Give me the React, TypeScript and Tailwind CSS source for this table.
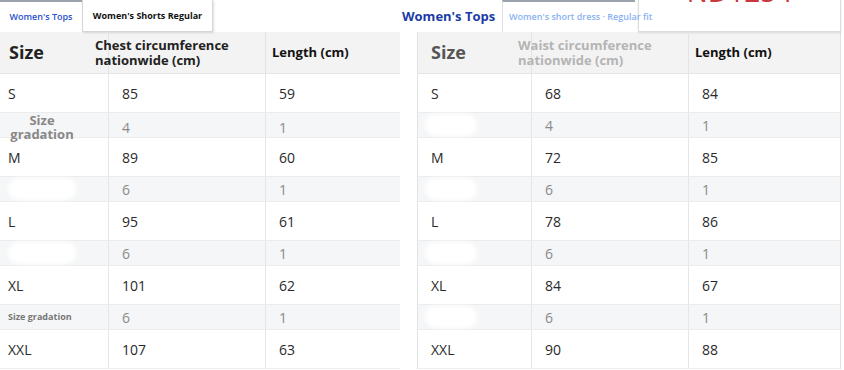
const font = { fontFamily: '"Open Sans", "Noto Sans", sans-serif' }

type Row = { size: string; a: string; b: string; grad?: boolean }

const leftRows: Row[] = [
  { size: 'S', a: '85', b: '59' },
  { size: '', a: '4', b: '1', grad: true },
  { size: 'M', a: '89', b: '60' },
  { size: '', a: '6', b: '1', grad: true },
  { size: 'L', a: '95', b: '61' },
  { size: '', a: '6', b: '1', grad: true },
  { size: 'XL', a: '101', b: '62' },
  { size: '', a: '6', b: '1', grad: true },
  { size: 'XXL', a: '107', b: '63' },
]

const rightRows: Row[] = [
  { size: 'S', a: '68', b: '84' },
  { size: '', a: '4', b: '1', grad: true },
  { size: 'M', a: '72', b: '85' },
  { size: '', a: '6', b: '1', grad: true },
  { size: 'L', a: '78', b: '86' },
  { size: '', a: '6', b: '1', grad: true },
  { size: 'XL', a: '84', b: '67' },
  { size: '', a: '6', b: '1', grad: true },
  { size: 'XXL', a: '90', b: '88' },
]

function LeftLabel({ index }: { index: number }) {
  if (index === 1)
    return (
      <div className="w-[68px] text-center text-[13px] font-bold leading-[14px] text-[#888]">
        Size
        <br />
        gradation
      </div>
    )
  if (index === 7) return <span className="text-[9px] font-bold text-[#777]">Size gradation</span>
  return <div className="h-[22px] w-[68px] rounded-full bg-white blur-[2px]" />
}

function Table({ rows, cols, right }: { rows: Row[]; cols: string; right?: boolean }) {
  return (
    <div className={right ? 'border-r border-l border-[#e2e2e2]' : ''}>
      <div className={`grid ${cols} h-[42px] border-b border-[#e4e4e4] bg-[#f3f3f3]`}>
        <div
          className={`flex items-center ${right ? 'pl-[13px] text-[#555]' : 'pl-[9px] text-[#222]'} text-[18px] font-bold`}
        >
          Size
        </div>
        <div className="flex items-center border-l border-[#e4e4e4]">
          <div
            className={`-ml-[14px] text-[13px] font-bold leading-[15px] whitespace-nowrap ${right ? 'text-[#b4b4b4]' : 'text-[#222]'}`}
          >
            {right ? 'Waist circumference' : 'Chest circumference'}
            <br />
            nationwide (cm)
          </div>
        </div>
        <div className="flex items-center border-l border-[#e4e4e4] pl-[6px] text-[13px] font-bold text-[#111]">
          Length (cm)
        </div>
      </div>
      {rows.map((r, i) => (
        <div
          key={i}
          className={`grid ${cols} border-b border-[#ececec] ${r.grad ? 'h-[25px] bg-[#f5f6f7] text-[#8a8a8a]' : 'h-[39px] bg-white text-[#2a2a2a]'} text-[14px]`}
        >
          <div className={`flex items-center ${right ? 'pl-[13px]' : 'pl-[8px]'} ${r.grad ? '' : 'font-medium'}`}>
            {r.grad ? (
              right ? (
                <div className="-ml-[6px] h-[22px] w-[52px] rounded-full bg-white blur-[2px]" />
              ) : (
                <LeftLabel index={i} />
              )
            ) : (
              r.size
            )}
          </div>
          <div className={`flex items-center border-l border-[#e6e6e6] pl-[13px] ${r.size === 'L' ? 'font-medium' : ''}`}>
            {r.a}
          </div>
          <div className={`flex items-center border-l border-[#e6e6e6] pl-[13px] ${r.size === 'L' ? 'font-medium' : ''}`}>
            {r.b}
          </div>
        </div>
      ))}
    </div>
  )
}

export default function App() {
  return (
    <div className="flex h-[370px] w-[844px] overflow-hidden bg-white" style={font}>
      <div className="w-[400px] shrink-0">
        <div className="flex h-[32px] items-stretch">
          <div className="flex w-[82px] items-center justify-center border-t-[2px] border-[#9aa3ab] text-[9px] font-semibold whitespace-nowrap text-[#2a52d0]">
            Women's Tops
          </div>
          <div className="flex w-[131px] items-center justify-center border border-t-0 border-[#d6d6d6] text-[9px] font-bold whitespace-nowrap text-[#111] shadow-[1px_1px_2px_rgba(0,0,0,0.12)]">
            Women's Shorts Regular
          </div>
        </div>
        <Table rows={leftRows} cols="grid-cols-[108px_157px_135px]" />
      </div>
      <div className="ml-[2px] flex-1">
        <div className="flex h-[32px] items-stretch">
          <div className="flex w-[100px] items-center pt-[1px] text-[13px] font-bold whitespace-nowrap text-[#1b3ba6]">
            Women's Tops
          </div>
          <div className="relative z-10 flex w-[133px] items-center border-t-[2px] border-l border-[#9aa3ab] border-l-[#e0e0e0] pl-[6px] text-[9px] font-semibold whitespace-nowrap text-[#8ab2f2]">
            Women's short dress · Regular fit
          </div>
          <div className="ml-[3px] flex w-[203px] justify-center overflow-hidden border-r border-b border-l border-[#dcdcdc] shadow-[0_1px_2px_rgba(0,0,0,0.1)]">
            <span className="-mt-[24px] text-[28px] leading-[30px] text-[#c8363e]">ND1254</span>
          </div>
        </div>
        <div className="ml-[15px] w-[424px]">
          <Table rows={rightRows} cols="grid-cols-[113px_157px_152px]" right />
        </div>
      </div>
    </div>
  )
}
